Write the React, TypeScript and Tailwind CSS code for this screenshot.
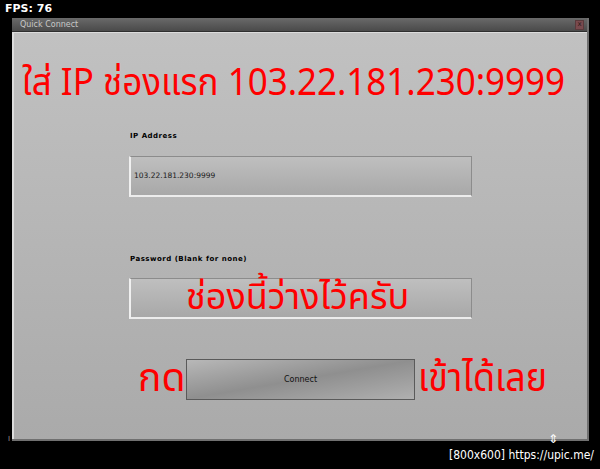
import React from "react";

const thai = { fontFamily: '"Noto Sans Thai", "Loma", "Tlwg Typist", "DejaVu Sans", "Noto Sans", sans-serif' };

export default function App() {
  return (
    <div className="relative w-[600px] h-[469px] bg-black overflow-hidden" style={{ fontFamily: '"DejaVu Sans", sans-serif' }}>
      <div className="absolute left-[5px] top-[3px] text-white text-[11px] font-bold leading-none">FPS: 76</div>

      <div className="absolute left-[12px] top-[18px] w-[577px] h-[423px] flex flex-col border-r-2 border-b-2 border-[#707070]">
        <div className="h-[14px] bg-gradient-to-b from-[#6a6a6a] to-[#4a4a4a] border-b border-[#2e2e2e] flex items-center justify-between pl-[8px] pr-[3px]">
          <span className="text-[#c8c8c8] text-[8px] leading-none">Quick Connect</span>
          <span className="w-[9px] h-[10px] bg-[#7a4a4e] border border-[#5a3a3c] text-[#2a1a1a] text-[7px] leading-none flex items-center justify-center">x</span>
        </div>
        <div className="flex-1 bg-gradient-to-b from-[#c1c1c1] to-[#aaaaaa] border-l-2 border-t border-[#dcdcdc] flex flex-col">
          <div className="h-[68px] mt-[17px] flex items-center pl-[8px] text-[#ff0000] text-[38px] leading-none whitespace-nowrap" style={thai}>
            <span className="inline-block origin-left scale-x-[0.92]">ใส่ IP ช่องแรก 103.22.181.230:9999</span>
          </div>
          <div className="pl-[116px] mt-[13px] text-[7px] font-bold text-black tracking-[0.5px]">IP Address</div>
          <div className="ml-[115px] mt-[14px] w-[343px] h-[41px] border border-[#8c8c8c] border-l-2 border-l-[#f0f0f0] border-b-2 border-b-[#ececec] bg-gradient-to-b from-[#bfbfbf] to-[#a8a8a8] flex items-center pl-[3px] text-[7.5px] text-[#1a1a1a]">
            103.22.181.230:9999
          </div>
          <div className="pl-[116px] mt-[57px] text-[7px] font-bold text-black tracking-[0.5px]">Password (Blank for none)</div>
          <div className="ml-[115px] mt-[14px] w-[343px] h-[41px] border border-[#8c8c8c] border-l-2 border-l-[#f0f0f0] border-b-2 border-b-[#ececec] bg-gradient-to-b from-[#bfbfbf] to-[#a8a8a8] flex items-center pl-[55px] text-[#ff0000] text-[36px] leading-none whitespace-nowrap" style={thai}>
            ช่องนี้ว่างไว้ครับ
          </div>
          <div className="mt-[40px] ml-[124px] flex items-center gap-[3px]">
            <span className="text-[#ff0000] text-[39px] leading-none w-[45px]" style={thai}>กด</span>
            <div className="w-[229px] h-[41px] border border-[#5a5a5a] bg-gradient-to-br from-[#b8b8b8] via-[#8f8f8f] to-[#b0b0b0] flex items-center justify-center text-[8px] text-[#111]">
              Connect
            </div>
            <span className="text-[#ff0000] text-[39px] leading-none inline-block origin-left scale-x-[0.92]" style={thai}>เข้าได้เลย</span>
          </div>
        </div>
      </div>

      <div className="absolute left-[8px] top-[436px] text-[#9a9a9a] text-[7px] leading-none">I</div>
      <div className="absolute left-[548px] top-[433px] text-white text-[12px] leading-none">⇕</div>
      <div className="absolute left-[449px] top-[449px] text-white text-[12px] leading-none whitespace-nowrap" style={{ fontFamily: '"DejaVu Sans Condensed", "DejaVu Sans", sans-serif' }}>
        [800x600] https://upic.me/
      </div>
    </div>
  );
}
